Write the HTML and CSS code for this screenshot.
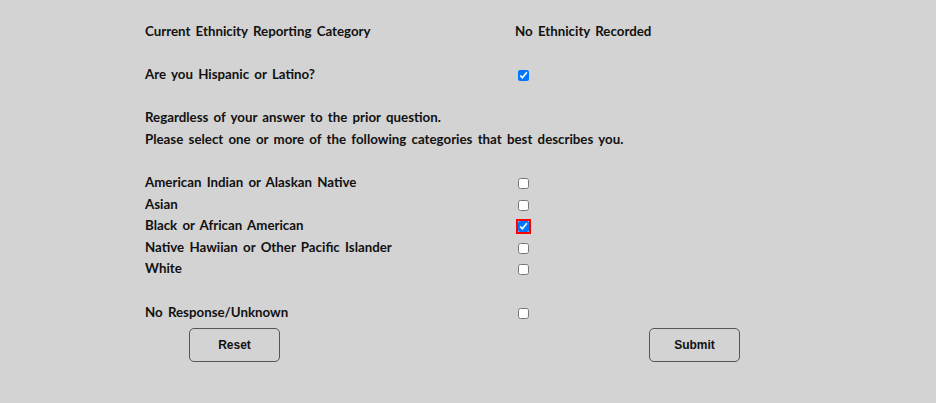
FILE: index.html
```html
<!DOCTYPE html>
<html lang="en">
<head>
<meta charset="utf-8">
<title>Ethnicity</title>
<link rel="stylesheet" href="styles.css">
</head>
<body>
<form class="form">
  <div class="rows">
    <div class="row">
      <span class="label">Current Ethnicity Reporting Category</span>
      <span class="value">No Ethnicity Recorded</span>
    </div>
    <div class="row gap">
      <span class="label">Are you Hispanic or Latino?</span>
      <span class="value"><input type="checkbox" class="cb" checked></span>
    </div>
    <div class="row gap">
      <span class="label">Regardless of your answer to the prior question.</span>
    </div>
    <div class="row">
      <span class="label">Please select one or more of the following categories that best describes you.</span>
    </div>
    <div class="row gap">
      <span class="label">American Indian or Alaskan Native</span>
      <span class="value"><input type="checkbox" class="cb"></span>
    </div>
    <div class="row">
      <span class="label">Asian</span>
      <span class="value"><input type="checkbox" class="cb"></span>
    </div>
    <div class="row">
      <span class="label">Black or African American</span>
      <span class="value"><input type="checkbox" class="cb cb-error" checked></span>
    </div>
    <div class="row">
      <span class="label">Native Hawiian or Other Pacific Islander</span>
      <span class="value"><input type="checkbox" class="cb"></span>
    </div>
    <div class="row">
      <span class="label">White</span>
      <span class="value"><input type="checkbox" class="cb"></span>
    </div>
    <div class="row gap">
      <span class="label">No Response/Unknown</span>
      <span class="value"><input type="checkbox" class="cb"></span>
    </div>
  </div>
  <div class="actions">
    <button type="reset" class="btn">Reset</button>
    <button type="button" class="btn">Submit</button>
  </div>
</form>
</body>
</html>
```
FILE: styles.css
```css
html, body {
  margin: 0;
  padding: 0;
  background: #d3d3d3;
}
body {
  width: 936px;
  height: 403px;
  overflow: hidden;
  font-family: "Century Gothic", "Lato", "DejaVu Sans", sans-serif;
  color: #111;
}
.form {
  padding: 20px 0 0 145px;
}
.rows {
  display: flex;
  flex-direction: column;
}
.row {
  height: 21.6px;
  display: flex;
  align-items: center;
  font-size: 13.3px;
  font-weight: 700;
  word-spacing: 2px;
  white-space: nowrap;
}
.gap {
  margin-top: 21.6px;
}
.label {
  width: 370px;
  flex: none;
}
.row .label:only-child {
  width: auto;
}
.value {
  display: flex;
  align-items: center;
}
.cb {
  width: 11px;
  height: 11px;
  margin: 3px 0 0 3px;
}
.cb-error {
  outline: 2px solid #ff0000;
  outline-offset: 0;
}
.actions {
  display: flex;
  padding: 6px 0 0 44px;
  gap: 369px;
}
.btn {
  width: 91px;
  height: 34px;
  padding: 0;
  background: transparent;
  border: 1px solid #555;
  border-radius: 5px;
  font-family: "Liberation Sans", Arial, sans-serif;
  font-weight: 700;
  font-size: 12px;
  color: #111;
}
```
